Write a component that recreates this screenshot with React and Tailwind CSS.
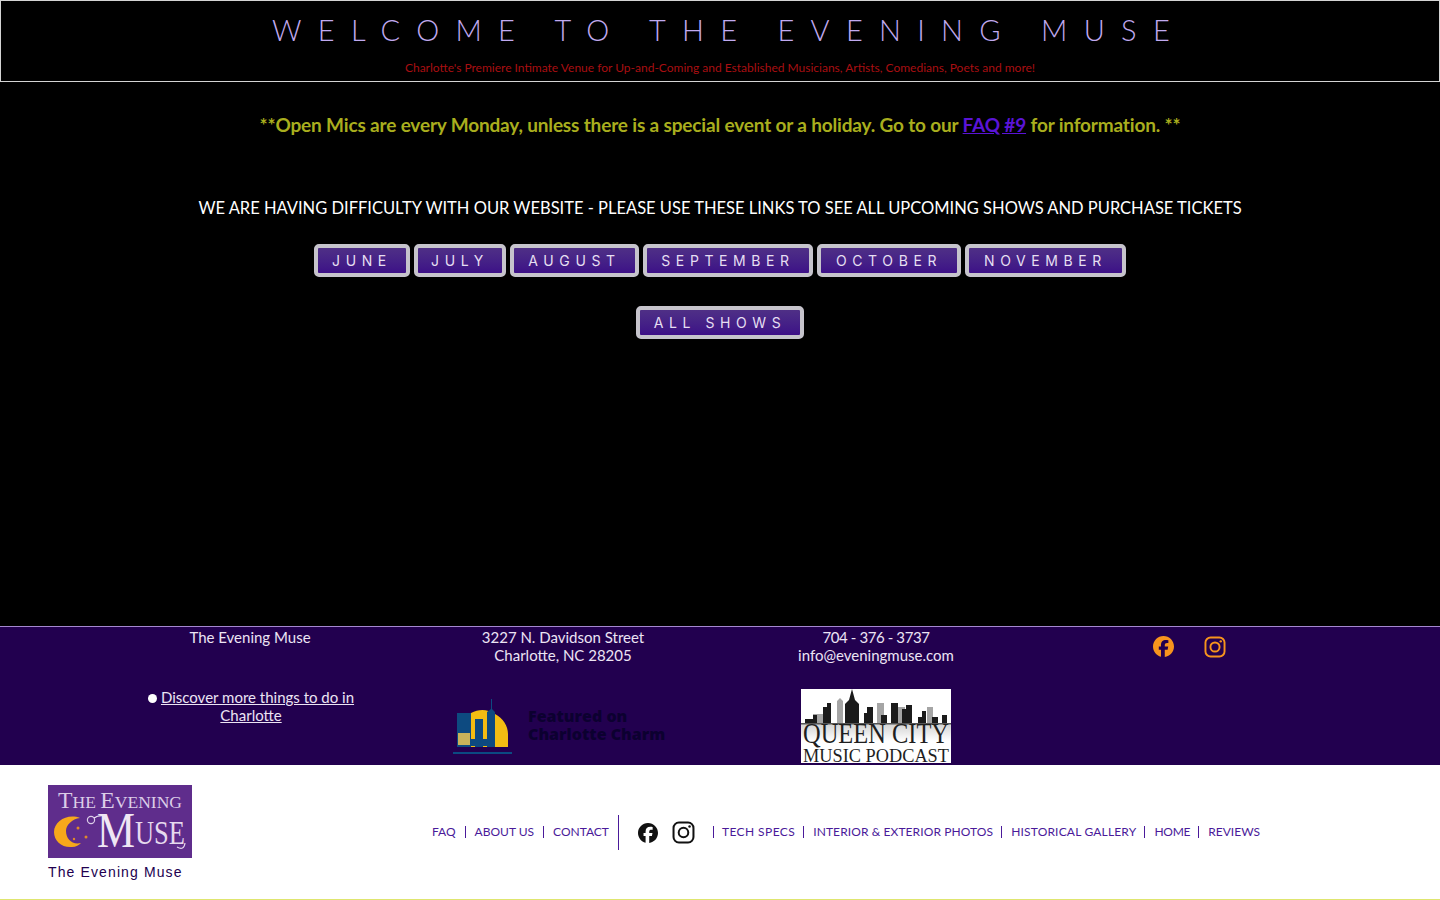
import { FaFacebook } from 'react-icons/fa6';

const months = [
  { label: 'JUNE', width: 'w-[96px]' },
  { label: 'JULY', width: 'w-[92px]' },
  { label: 'AUGUST', width: 'w-[129px]' },
  { label: 'SEPTEMBER', width: 'w-[170px]' },
  { label: 'OCTOBER', width: 'w-[144px]' },
  { label: 'NOVEMBER', width: 'w-[161px]' },
];
const navLeft = ['FAQ', 'ABOUT US', 'CONTACT'];
const navRight = [
  { label: 'TECH SPECS', tracking: 'tracking-[0.035em]' },
  { label: 'INTERIOR & EXTERIOR PHOTOS', tracking: 'tracking-[0.008em]' },
  { label: 'HISTORICAL GALLERY', tracking: 'tracking-[0.015em]' },
  { label: 'HOME', tracking: 'tracking-[-0.02em]' },
  { label: 'REVIEWS', tracking: 'tracking-[0em]' },
];

const InstagramIcon = ({ className }) => (
  <svg viewBox="0 0 24 24" className={className} fill="none" stroke="currentColor">
    <rect x="1.6" y="1.6" width="20.8" height="20.8" rx="5.6" strokeWidth="2.1" />
    <circle cx="12" cy="12" r="5" strokeWidth="2.1" />
    <circle cx="18.3" cy="5.8" r="1.3" fill="currentColor" stroke="none" />
  </svg>
);

const MonthButton = ({ label, className }) => (
  <a className={`flex h-[33px] items-center justify-center rounded-[5px] border-[4px] border-[#c6c4cc] bg-gradient-to-b from-[#4f2f86] to-[#3d0f87] font-['Inter',sans-serif] text-[14px] leading-none tracking-[0.4em] text-[#e6dff2] ${className}`}>
    {label}
  </a>
);

const CharmLogo = () => (
  <svg viewBox="0 0 60 56" className="h-[56px] w-[60px] shrink-0">
    <path d="M19 15 C27 11 35 11 43 16 C51 20 56 28 56 36 L56 49 L19 49 Z" fill="#f3bd12" />
    <rect x="5" y="15" width="14" height="34" fill="#0d4a80" />
    <rect x="23" y="21" width="8" height="28" fill="#0d4a80" />
    <path d="M35 49V14l4-3V1h1v10l3 3v35z" fill="#0d4a80" />
    <rect x="6" y="35" width="12" height="12" fill="#c9b35a" />
    <rect x="19" y="41" width="16" height="7" fill="#0d4a80" />
    <rect x="1" y="54" width="59" height="2" fill="#0b4a82" />
  </svg>
);

const PodcastLogo = () => (
  <svg viewBox="0 0 150 74" className="h-[74px] w-[150px]">
    <defs>
      <linearGradient id="podcastFade" x1="0" y1="0" x2="0" y2="1">
        <stop offset="0" stopColor="#d0d0d0" />
        <stop offset="1" stopColor="#ffffff" />
      </linearGradient>
    </defs>
    <rect width="150" height="74" fill="#ffffff" />
    <path d="M12 34V25h10v9zM36 34V12l3-3 3 3v22zM76 34V14h7v20zM96 34V18h8v16zM126 34V18h6v16z" fill="#a5a5a5" />
    <path d="M4 34v-4h8v-4h4v8h6V18h4v-4h4v20h14V15l4-4 3-11 3 11 4 4v19h5V24h3v-6h6v16h8V26h6v8h4V14h7v20h4V20h4v-4h6v18h6v-6h4v-6h4v12h6v-6h6v6h4v-8h5v8z" fill="#1b1b1b" />
    <rect y="34" width="150" height="18" fill="url(#podcastFade)" />
    <rect y="34" width="150" height="1.5" fill="#555555" />
    <text x="75" y="54" textAnchor="middle" fontFamily="Liberation Serif" fontSize="29" textLength="146" lengthAdjust="spacingAndGlyphs" fill="#1f1f1f">QUEEN CITY</text>
    <text x="75" y="73" textAnchor="middle" fontFamily="Liberation Serif" fontSize="18.5" textLength="146" lengthAdjust="spacingAndGlyphs" fill="#1f1f1f">MUSIC PODCAST</text>
  </svg>
);

const MuseLogo = () => (
  <svg viewBox="0 0 144 73" className="h-[73px] w-[144px]">
    <rect width="144" height="73" fill="#5f2d8c" />
    <text x="72" y="23" textAnchor="middle" fontFamily="Liberation Serif" fontSize="17" textLength="124" lengthAdjust="spacingAndGlyphs" fill="#dccde8">
      <tspan fontSize="23">T</tspan>HE <tspan fontSize="23">E</tspan>VENING
    </text>
    <path d="M32 33 C20 28 6 36 6 47 C6 56 14 63 24 62 C28 62 31 60 33 58 C24 60 18 54 18 46 C18 40 24 34 32 33Z" fill="#f7a81b" />
    <circle cx="30" cy="43" r="1.5" fill="#e0892a" />
    <circle cx="38" cy="52" r="1.5" fill="#e0892a" />
    <circle cx="26" cy="54" r="1.2" fill="#e0892a" />
    <circle cx="43" cy="35" r="3.6" fill="none" stroke="#dccde8" strokeWidth="1.2" />
    <path d="M46 33 Q50 30 57 31" fill="none" stroke="#efe6f4" strokeWidth="1.2" />
    <text x="49" y="62" fontFamily="Liberation Serif" fontSize="50" textLength="38" lengthAdjust="spacingAndGlyphs" fill="#efe6f4">M</text>
    <text x="87" y="59" fontFamily="Liberation Serif" fontSize="33" textLength="50" lengthAdjust="spacingAndGlyphs" fill="#e6d9ee">USE</text>
    <path d="M129 62 Q136 66 137 58" fill="none" stroke="#e6d9ee" strokeWidth="1.2" />
  </svg>
);

const App = () => {
  return (
    <div className="flex h-[900px] flex-col overflow-hidden bg-black font-['Lato','Open_Sans',sans-serif]">
      <header className="flex h-[82px] shrink-0 flex-col items-center border border-[#d4d4d4]">
        <h1 className="ml-[18px] mt-[11px] whitespace-pre text-[29px] font-light leading-[36px] tracking-[16.3px] text-[#c0aaf0]">WELCOME TO THE EVENING MUSE</h1>
        <p className="mt-[13px] text-[12px] leading-[14px] text-[#a80f12]">
          Charlotte's Premiere Intimate Venue for Up-and-Coming and Established Musicians, Artists, Comedians, Poets and more!
        </p>
      </header>

      <main className="flex h-[544px] shrink-0 flex-col items-center">
        <p className="mt-[31px] text-[19px] font-bold leading-6 tracking-[-0.0085em] text-[#a9ae1e]">
          **Open Mics are every Monday, unless there is a special event or a holiday. Go to our{' '}
          <a className="font-bold text-[#5a14d6] underline">FAQ #9</a> for information. **
        </p>
        <p className="mt-[59px] text-[16.5px] leading-6 text-white">
          WE ARE HAVING DIFFICULTY WITH OUR WEBSITE - PLEASE USE THESE LINKS TO SEE ALL UPCOMING SHOWS AND PURCHASE TICKETS
        </p>
        <div className="mt-[24px] flex gap-1">
          {months.map((m) => (
            <MonthButton key={m.label} label={m.label} className={m.width} />
          ))}
        </div>
        <div className="mt-[29px]">
          <MonthButton label="ALL SHOWS" className="w-[168px]" />
        </div>
      </main>

      <section className="flex h-[139px] shrink-0 border-t border-[#a487cf] bg-[#22004f] pl-[135px] text-[15px] leading-[18px] text-[#ece4f4]">
        <div className="grid w-[856px] grid-cols-[230px_230px_230px] grid-rows-[60px_1fr] gap-x-[83px] text-center">
          <p className="pt-[1px]">The Evening Muse</p>
          <p className="pt-[1px]">3227 N. Davidson Street<br />Charlotte, NC 28205</p>
          <p className="pt-[1px]"><span className="tracking-[-0.4px]">704 - 376 - 3737</span><br />info@eveningmuse.com</p>
          <p className="pl-[2px] pt-[1px]">
            <span className="mr-[4px] inline-block h-[9px] w-[9px] rounded-full bg-white"></span>
            <a className="underline">Discover more things to do in Charlotte</a>
          </p>
          <div className="flex items-start pl-[4px] pt-[11px]">
            <CharmLogo />
            <p className="ml-[16px] mt-[9px] whitespace-nowrap text-left font-['Open_Sans',sans-serif] text-[16px] font-extrabold leading-[18px] text-[#0c0030]">
              Featured on<br />Charlotte Charm
            </p>
          </div>
          <div className="flex justify-center pt-[2px]">
            <PodcastLogo />
          </div>
        </div>
        <div className="ml-[162px] flex items-start gap-[30px] pt-[9px] text-[#f7941d]">
          <FaFacebook className="h-[21px] w-[21px]" />
          <InstagramIcon className="h-[22px] w-[22px]" />
        </div>
      </section>

      <footer className="flex flex-1 border-b border-[#dfe66f] bg-white pl-[48px] pt-[20px]">
        <div className="w-[144px] shrink-0">
          <MuseLogo />
          <p className="mt-[5px] font-['Liberation_Sans',sans-serif] text-[14px] leading-[18px] tracking-[0.08em] text-[#22004f]">The Evening Muse</p>
        </div>
        <nav className="ml-[240px] mt-[30px] flex h-[35px] items-center whitespace-nowrap text-[12px] text-[#4a1a9a]">
          {navLeft.map((item, i) => (
            <span key={item} className={i > 0 ? 'mb-[2px] ml-[9px] border-l border-[#4a1a9a] pl-[9px] leading-[12px]' : 'mb-[2px] leading-[12px]'}>{item}</span>
          ))}
          <span className="ml-[9px] h-[35px] border-l border-[#4a1a9a]"></span>
          <FaFacebook className="ml-[19px] h-[20px] w-[20px] text-[#111111]" />
          <InstagramIcon className="ml-[14px] h-[23px] w-[23px] text-[#111111]" />
          <span className="mb-[2px] ml-[18px] h-[12px] border-l border-[#4a1a9a]"></span>
          {navRight.map((item, i) => (
            <span key={item.label} className={`mb-[2px] leading-[12px] ${item.tracking} ${i > 0 ? 'ml-[8px] border-l border-[#4a1a9a] pl-[9px]' : 'ml-[8px]'}`}>{item.label}</span>
          ))}
        </nav>
      </footer>
    </div>
  );
};

export default App;
